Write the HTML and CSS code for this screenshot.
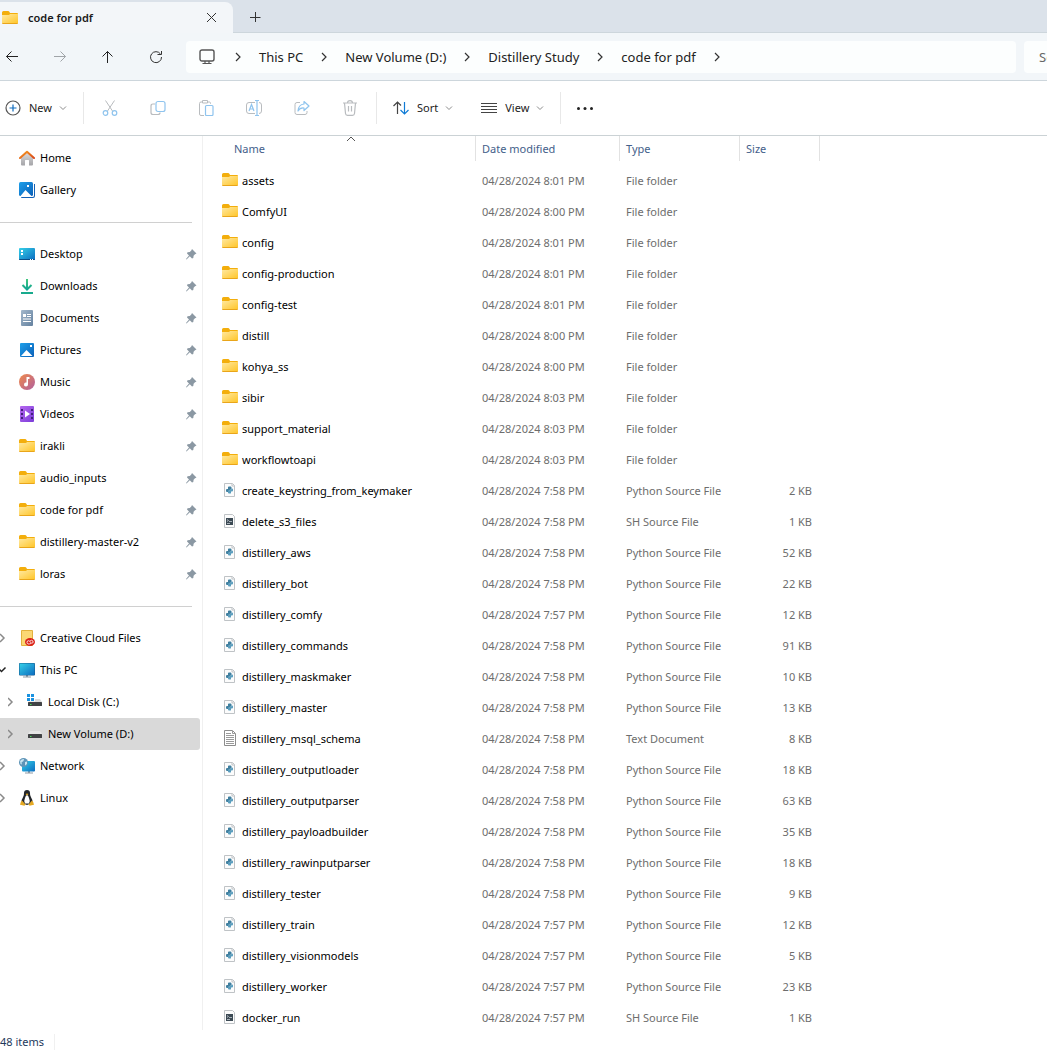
FILE: index.html
```html
<!DOCTYPE html>
<html lang="en">
<head>
    <meta charset="UTF-8">
    <meta name="viewport" content="width=device-width, initial-scale=1.0">
    <title>code for pdf</title>
    <link rel="stylesheet" href="styles.css">
</head>
<body>
    <!-- Icons -->
    <svg class="sprite" aria-hidden="true">
        <defs>
            <linearGradient id="g-folder" x1="0" y1="0" x2="1" y2="1"><stop offset="0" stop-color="#ffe9a2"/><stop offset="1" stop-color="#ffc62b"/></linearGradient>
            <linearGradient id="g-blue" x1="0" y1="0" x2="1" y2="1"><stop offset="0" stop-color="#1ea0ea"/><stop offset="1" stop-color="#0a5fb8"/></linearGradient>
            <linearGradient id="g-screen" x1="0" y1="0" x2="1" y2="1"><stop offset="0" stop-color="#35d0e8"/><stop offset="1" stop-color="#0c6cc0"/></linearGradient>
            <linearGradient id="g-roof" x1="0" y1="0" x2="1" y2="1"><stop offset="0" stop-color="#f79a1e"/><stop offset="1" stop-color="#d9481a"/></linearGradient>
            <linearGradient id="g-wall" x1="0" y1="0" x2="0" y2="1"><stop offset="0" stop-color="#dedede"/><stop offset="1" stop-color="#a4a4a8"/></linearGradient>
            <linearGradient id="g-down" x1="0" y1="0" x2="0" y2="1"><stop offset="0" stop-color="#3fc77c"/><stop offset="1" stop-color="#12a594"/></linearGradient>
            <linearGradient id="g-doc" x1="0" y1="0" x2="1" y2="1"><stop offset="0" stop-color="#a3b8cc"/><stop offset="1" stop-color="#64819f"/></linearGradient>
            <linearGradient id="g-music" x1="0" y1="0" x2="1" y2="1"><stop offset="0" stop-color="#f08a4b"/><stop offset="1" stop-color="#b05f9e"/></linearGradient>
            <linearGradient id="g-video" x1="0" y1="0" x2="1" y2="1"><stop offset="0" stop-color="#b668f0"/><stop offset="1" stop-color="#7a3cd8"/></linearGradient>
        </defs>
        <symbol id="folder" viewBox="0 0 16 16">
            <path fill="#f3ae0c" d="M0 2.5Q0 1 1.5 1H6Q7 1 7.5 2L8 3H15Q16 3 16 4V6H0z"/>
            <path fill="url(#g-folder)" d="M0 5H6.6Q7.4 5 8 4H16V13H0z"/>
            <path fill="#e9a51a" d="M0 13H16Q16 14 15 14H1Q0 14 0 13z"/>
        </symbol>
        <symbol id="home" viewBox="0 0 16 16">
            <path fill="url(#g-wall)" d="M2 7L8 2L14 7V14.5Q14 15.5 13 15.5H10V10.5Q10 10 9.500 10H6.500Q6 10 6 10.500V15.500H3Q2 15.500 2 14.500z"/>
            <path fill="none" stroke="url(#g-roof)" stroke-width="2" stroke-linecap="round" stroke-linejoin="round" d="M1 8L8 1.800L15 8"/>
        </symbol>
        <symbol id="gallery" viewBox="0 0 16 16">
            <path fill="#1561b5" d="M15 2H16V14Q16 16 14 16H3Q2 16 2 15H13.500Q15 15 15 13.500z"/>
            <rect fill="url(#g-blue)" width="14" height="14" rx="1.500"/>
            <path fill="#fff" d="M1.500 14L6.500 8L12.500 14zM8 3h2v2H8z"/>
        </symbol>
        <symbol id="desktop" viewBox="0 0 16 16">
            <rect fill="url(#g-screen)" y="2" width="16" height="12" rx="1"/>
            <path fill="#0b4d86" d="M0 13H16Q16 14 15 14H1Q0 14 0 13z"/>
            <path fill="#fff" d="M2 4H4V6H2zM2 7H4V9H2zM11 13H12V14H11zM13 13H14V14H13z"/>
        </symbol>
        <symbol id="downloads" viewBox="0 0 16 16">
            <path fill="none" stroke="url(#g-down)" stroke-width="2" d="M8.010 1V11M3.500 7L8 11.500L12.500 7"/>
            <path fill="#18aa8d" d="M2 14H14V16H2z"/>
        </symbol>
        <symbol id="documents" viewBox="0 0 16 16">
            <rect fill="url(#g-doc)" x="2" width="12" height="16" rx="1"/>
            <path fill="#fff" d="M4 4H7V7H4zM8 4H12V5H8zM8 6H12V7H8zM4 8.500H12V9.500H4zM4 11H12V12H4z"/>
        </symbol>
        <symbol id="pictures" viewBox="0 0 16 16">
            <rect fill="url(#g-blue)" x="1" y="1" width="14" height="14" rx="1"/>
            <path fill="#fff" d="M2 14L7.500 8L13.500 14zM11 3h2v2h-2z"/>
        </symbol>
        <symbol id="music" viewBox="0 0 16 16">
            <circle fill="url(#g-music)" cx="8" cy="8" r="8"/>
            <path fill="#fff" d="M7.500 3H10.500V5H9V10.500A2 2 0 1 1 7.500 8.600z"/>
        </symbol>
        <symbol id="videos" viewBox="0 0 16 16">
            <rect fill="url(#g-video)" x="1" width="14" height="16" rx="1"/>
            <path fill="#43217c" d="M2 3h2v2H2zM2 7h2v2H2zM2 11h2v2H2zM12 3h2v2h-2zM12 7h2v2h-2zM12 11h2v2h-2z"/>
            <path fill="#fff" d="M6 4.500L11 8L6 11.500z"/>
        </symbol>
        <symbol id="pin" viewBox="0 0 12 12">
            <path fill="#8b98a3" d="M7 1L11.500 5.500L10 6.200L8.600 7.800L8.300 10L7 10.500L4.800 8.200L1.500 11.500L1 11L4 7.500L2 5.400L2.500 4.300L4.800 4L6.300 2.500z"/>
        </symbol>
        <symbol id="creative" viewBox="0 0 16 16">
            <path fill="#fbd774" stroke="#e3b13c" d="M2.500 .5H13.500V15.500H2.500z"/>
            <ellipse cx="11" cy="12" rx="5" ry="4" fill="#da1f16"/>
            <path fill="none" stroke="#fff" stroke-width=".8" d="M12 13.500Q8 15 8 12.300Q8 10.500 9.800 10.700Q11 11 12.500 13.300Q15 13 14 11Q12.500 9.500 11 11"/>
        </symbol>
        <symbol id="monitor" viewBox="0 0 16 16">
            <path fill="#8e9aa5" d="M7 13H9V14.500H12V15.500H4V14.500H7z"/>
            <rect fill="#155a8f" y="1" width="16" height="12.500" rx="1"/>
            <rect fill="url(#g-screen)" x=".5" y="1.500" width="15" height="11.500" rx=".5"/>
        </symbol>
        <symbol id="disk-c" viewBox="0 0 16 16">
            <path fill="#1a92e0" d="M0 0H3V3H0zM4 0H7V3H4zM0 4H3V7H0zM4 4H7V7H4z"/>
            <path fill="#dcdcdc" d="M8 5H13L15 8H1L2 7.500H8z"/>
            <rect fill="#414345" x="1" y="8" width="14" height="4" rx=".5"/>
            <path fill="#4be05a" d="M3 10h1.500v1H3z"/>
        </symbol>
        <symbol id="disk-d" viewBox="0 0 16 16">
            <path fill="#e6e6e6" d="M3 5H13L15 8H1z"/>
            <rect fill="#414345" x="1" y="8" width="14" height="4" rx=".5"/>
            <path fill="#4be05a" d="M3 10h1.500v1H3z"/>
        </symbol>
        <symbol id="network" viewBox="0 0 16 16">
            <path fill="#8e9aa5" d="M9 13H11V14.500H14V15.500H6V14.500H9z"/>
            <rect fill="url(#g-screen)" x="3" y="3" width="13" height="10.500" rx="1"/>
            <circle cx="4.500" cy="4.500" r="4.500" fill="#5f95b8"/>
            <path fill="#c8e4f0" d="M1 3Q3 .5 5 1L4.500 3L2.500 4.500L3 6.500L1.500 6zM6 4L8 3.500L8 6L6 7.500z"/>
        </symbol>
        <symbol id="linux" viewBox="0 0 16 16">
            <path fill="#23262a" d="M8 0Q5 0 5 3Q5.200 5.500 4 7.200Q2 10 2.500 13L8 15L13.500 13Q14 10 12 7.200Q10.800 5.500 11 3Q11 0 8 0z"/>
            <path fill="#fff" d="M8 5Q6.600 5.500 6 8Q4.500 11 6 13.500H10Q11.500 11 10 8Q9.400 5.500 8 5z"/>
            <path fill="#e5a923" d="M6.500 4Q8 3 9.500 4L8 5.500zM3 10.500L6.500 14.500Q6 16 4.500 15.500L1 14.700Q1.500 12 3 10.500zM13 10.500L9.500 14.500Q10 16 11.500 15.500L15 14.700Q14.500 12 13 10.500z"/>
        </symbol>
        <symbol id="python" viewBox="0 0 16 16">
            <path fill="#fcfcfc" stroke="#bfc3c6" d="M2.500 1.500H10.500L12.500 3.500V14.500H2.500z"/>
            <path fill="none" stroke="#bfc3c6" d="M10 2V4H12.500"/>
            <path fill="#3f7f9f" d="M6 5Q6 4.500 7 4.500H8.500Q9.500 4.500 9.500 5.500V7.500L7.500 8Q6.500 8.500 6.500 10H5Q4 10 4 9V8Q4 7 5 7H6z"/>
            <path fill="#5a9dbd" d="M9 11Q9 11.500 8 11.500H7Q6 11.500 6 10.500V9Q6.500 8 8 8Q9.500 8 9.500 6.500H10Q11 6.500 11 7.500V8.500Q11 9.500 10 9.500H9z"/>
        </symbol>
        <symbol id="shell" viewBox="0 0 16 16">
            <path fill="#fcfcfc" stroke="#bfc3c6" d="M2.500 1.500H10.500L12.500 3.500V14.500H2.500z"/>
            <path fill="#3c4a54" d="M4 5H11V12H4z"/>
            <path fill="none" stroke="#c4ccd2" stroke-width=".8" d="M5 6.500L6.500 7.500L5 8.500M7 8.500H10M5 10.500H8"/>
        </symbol>
        <symbol id="text" viewBox="0 0 16 16">
            <path fill="#fff" stroke="#8d8d8d" d="M2.500 .5H10.500L13.500 3.500V15.500H2.500z"/>
            <path fill="none" stroke="#9a9a9a" d="M4 3.500H9M4 5.500H12M4 7.500H12M4 9.500H12M4 11.500H12M4 13.500H12M10.500 1V3.500H13"/>
        </symbol>
        <symbol id="expand" viewBox="0 0 19 16">
            <path fill="none" stroke="#8a8a8a" stroke-width="1.500" d="M0 4L4 8L0 12"/>
        </symbol>
        <symbol id="expanded" viewBox="0 0 19 16">
            <path fill="none" stroke="#222" stroke-width="1.500" d="M-2 6L1.500 9.500L5.500 5.500"/>
        </symbol>
        <symbol id="chevron-down" viewBox="0 0 8 8">
            <path fill="none" stroke="#8c8c8c" d="M1 2.500L4 5.500L7 2.500"/>
        </symbol>
        <symbol id="chevron-right" viewBox="0 0 8 10">
            <path fill="none" stroke="#333" stroke-width="1.200" d="M2 1L6 5L2 9"/>
        </symbol>
    </svg>

    <header class="title-bar">
        <div class="tab">
            <svg class="icon"><use href="#folder"/></svg>
            <span class="tab-title">code for pdf</span>
            <button type="button" class="tab-button" aria-label="Close tab">
                <svg class="icon" viewBox="0 0 16 16"><path fill="none" stroke="#333" d="M4 3L13 12M13 3L4 12"/></svg>
            </button>
        </div>
        <button type="button" class="tab-button new-tab" aria-label="New tab">
            <svg class="icon" viewBox="0 0 16 16"><path fill="none" stroke="#333" d="M8.500 3V13M3 8.500H13.500"/></svg>
        </button>
    </header>

    <nav class="nav-bar">
        <div class="nav-buttons">
            <button type="button" aria-label="Back"><svg class="icon" viewBox="0 0 16 16"><path fill="none" stroke="#222" d="M14 7.500H2.500M7.500 2.500L2.500 7.500L7.500 12.500"/></svg></button>
            <button type="button" aria-label="Forward"><svg class="icon" viewBox="0 0 16 16"><path fill="none" stroke="#a0a4a8" d="M2 7.500H13.500M8.500 2.500L13.500 7.500L8.500 12.500"/></svg></button>
            <button type="button" aria-label="Up"><svg class="icon" viewBox="0 0 16 16"><path fill="none" stroke="#222" d="M7.500 14V2.500M2.500 7.500L7.500 2.500L12.500 7.500"/></svg></button>
            <button type="button" aria-label="Refresh"><svg class="icon" viewBox="0 0 16 16"><path fill="none" stroke="#333" d="M12.500 5A5.500 5.500 0 1 0 13.500 8M13.500 2V5.500H9.500"/></svg></button>
        </div>
        <div class="address-bar">
            <svg class="icon device" viewBox="0 0 16 16"><rect x="1" y="1" width="14" height="11" rx="2" fill="none" stroke="#555" stroke-width="1.400"/><path fill="none" stroke="#555" stroke-width="1.200" d="M6 12V14.500M10 12V14.500M3.500 14.500H12.500"/></svg>
            <svg class="crumb-arrow"><use href="#chevron-right"/></svg>
            <a href="#">This PC</a>
            <svg class="crumb-arrow"><use href="#chevron-right"/></svg>
            <a href="#">New Volume (D:)</a>
            <svg class="crumb-arrow"><use href="#chevron-right"/></svg>
            <a href="#">Distillery Study</a>
            <svg class="crumb-arrow"><use href="#chevron-right"/></svg>
            <a href="#">code for pdf</a>
            <svg class="crumb-arrow"><use href="#chevron-right"/></svg>
        </div>
        <input type="text" class="search" placeholder="Search" aria-label="Search">
    </nav>

    <div class="toolbar">
        <div class="tool-group first">
            <button type="button" class="menu-button">
                <svg class="icon" viewBox="0 0 16 16"><circle cx="8" cy="8" r="7" fill="none" stroke="#555" stroke-width="1.200"/><path fill="none" stroke="#0f6cbd" stroke-width="1.200" d="M8 4.500V11.500M4.500 8H11.500"/></svg>
                <span>New</span>
                <svg class="arrow"><use href="#chevron-down"/></svg>
            </button>
        </div>
        <div class="tool-group icons">
            <button type="button" aria-label="Cut" disabled><svg class="icon" viewBox="0 0 16 16"><path fill="none" stroke="#b9bcbf" d="M3.500 .5L10.500 11M12.500 .5L5.500 11"/><g fill="none" stroke="#8fc4ee" stroke-width="1.200"><circle cx="3.500" cy="13" r="2.300"/><circle cx="12.500" cy="13" r="2.300"/></g></svg></button>
            <button type="button" aria-label="Copy" disabled><svg class="icon" viewBox="0 0 16 16"><path fill="none" stroke="#b9bcbf" stroke-width="1.200" d="M5 4H3Q1 4 1 6V12.500Q1 14.500 3 14.500H8Q10 14.500 10 12.500"/><rect x="6" y="1.500" width="9" height="10" rx="2" fill="none" stroke="#8fc4ee" stroke-width="1.200"/></svg></button>
            <button type="button" aria-label="Paste" disabled><svg class="icon" viewBox="0 0 16 16"><path fill="none" stroke="#b9bcbf" d="M6 15.500H3Q1.500 15.500 1.500 14V3.500Q1.500 2 3 2H4.500M9.500 2H11.500Q12.500 2 12.500 3.500V4M4.500 .5H9.500V3H4.500z"/><rect x="7.500" y="5.500" width="7.500" height="10" rx="1" fill="none" stroke="#8fc4ee" stroke-width="1.200"/></svg></button>
            <button type="button" aria-label="Rename" disabled><svg class="icon" viewBox="0 0 16 16"><path fill="none" stroke="#b9bcbf" d="M9 13.500H3Q.5 13.500 .5 11V5Q.5 2.500 3 2.500H9M13 2.500Q15.500 2.500 15.500 5V11Q15.500 13.500 13 13.500"/><path fill="none" stroke="#8fc4ee" stroke-width="1.200" d="M3 11L5.500 4.500L8 11M4 9H7M9 .5H13M11 .5V15.500M9 15.500H13"/></svg></button>
            <button type="button" aria-label="Share" disabled><svg class="icon" viewBox="0 0 16 16"><path fill="none" stroke="#b9bcbf" d="M6 2.500H3Q1 2.500 1 4.500V12.500Q1 14.500 3 14.500H11Q13 14.500 13 12.500V11"/><path fill="none" stroke="#8fc4ee" stroke-width="1.200" stroke-linejoin="round" d="M10 1.500L15 6L10 10.500V8Q6 7.500 4 11Q4.500 4.500 10 4z"/></svg></button>
            <button type="button" aria-label="Delete" disabled><svg class="icon" viewBox="0 0 16 16"><path fill="none" stroke="#b9bcbf" stroke-width="1.200" d="M1 3H15M5.500 3Q5.500 .7 8 .7Q10.500 .7 10.500 3M2.500 3L3.500 13.500Q3.700 15.300 5.500 15.300H10.500Q12.300 15.300 12.500 13.500L13.500 3M6.500 6V11.500M9.500 6V11.500"/></svg></button>
        </div>
        <div class="tool-group">
            <button type="button" class="menu-button">
                <svg class="icon" viewBox="0 0 16 16"><path fill="none" stroke="#444" stroke-width="1.200" d="M4.500 14V2M.5 6L4.500 2L8 5.500"/><path fill="none" stroke="#0f7bd6" stroke-width="1.200" d="M11.500 2V14M7.500 10L11.500 14L15.500 10"/></svg>
                <span>Sort</span>
                <svg class="arrow"><use href="#chevron-down"/></svg>
            </button>
            <button type="button" class="menu-button">
                <svg class="icon" viewBox="0 0 16 16"><path fill="none" stroke="#444" d="M0 3.500H16M0 6.500H16M0 9.500H16M0 12.500H16"/></svg>
                <span>View</span>
                <svg class="arrow"><use href="#chevron-down"/></svg>
            </button>
        </div>
        <div class="tool-group">
            <button type="button" aria-label="See more"><svg class="icon" viewBox="0 0 16 16"><g fill="#222"><circle cx="1.500" cy="8.500" r="1.500"/><circle cx="8" cy="8.500" r="1.500"/><circle cx="14.500" cy="8.500" r="1.500"/></g></svg></button>
        </div>
    </div>

    <div class="content">
        <aside class="sidebar">
            <ul>
                <li><a href="#"><svg class="icon"><use href="#home"/></svg>Home</a></li>
                <li><a href="#"><svg class="icon"><use href="#gallery"/></svg>Gallery</a></li>
            </ul>
            <hr>
            <ul>
                <li><a href="#"><svg class="icon"><use href="#desktop"/></svg>Desktop<svg class="pin"><use href="#pin"/></svg></a></li>
                <li><a href="#"><svg class="icon"><use href="#downloads"/></svg>Downloads<svg class="pin"><use href="#pin"/></svg></a></li>
                <li><a href="#"><svg class="icon"><use href="#documents"/></svg>Documents<svg class="pin"><use href="#pin"/></svg></a></li>
                <li><a href="#"><svg class="icon"><use href="#pictures"/></svg>Pictures<svg class="pin"><use href="#pin"/></svg></a></li>
                <li><a href="#"><svg class="icon"><use href="#music"/></svg>Music<svg class="pin"><use href="#pin"/></svg></a></li>
                <li><a href="#"><svg class="icon"><use href="#videos"/></svg>Videos<svg class="pin"><use href="#pin"/></svg></a></li>
                <li><a href="#"><svg class="icon"><use href="#folder"/></svg>irakli<svg class="pin"><use href="#pin"/></svg></a></li>
                <li><a href="#"><svg class="icon"><use href="#folder"/></svg>audio_inputs<svg class="pin"><use href="#pin"/></svg></a></li>
                <li><a href="#"><svg class="icon"><use href="#folder"/></svg>code for pdf<svg class="pin"><use href="#pin"/></svg></a></li>
                <li><a href="#"><svg class="icon"><use href="#folder"/></svg>distillery-master-v2<svg class="pin"><use href="#pin"/></svg></a></li>
                <li><a href="#"><svg class="icon"><use href="#folder"/></svg>loras<svg class="pin"><use href="#pin"/></svg></a></li>
            </ul>
            <hr>
            <ul class="tree">
                <li><a href="#"><svg class="expander"><use href="#expand"/></svg><svg class="icon"><use href="#creative"/></svg>Creative Cloud Files</a></li>
                <li><a href="#"><svg class="expander"><use href="#expanded"/></svg><svg class="icon"><use href="#monitor"/></svg>This PC</a></li>
                <li><a href="#" class="child"><svg class="expander"><use href="#expand"/></svg><svg class="icon"><use href="#disk-c"/></svg>Local Disk (C:)</a></li>
                <li><a href="#" class="child selected"><svg class="expander"><use href="#expand"/></svg><svg class="icon"><use href="#disk-d"/></svg>New Volume (D:)</a></li>
                <li><a href="#"><svg class="expander"><use href="#expand"/></svg><svg class="icon"><use href="#network"/></svg>Network</a></li>
                <li><a href="#"><svg class="expander"><use href="#expand"/></svg><svg class="icon"><use href="#linux"/></svg>Linux</a></li>
            </ul>
        </aside>

        <main class="files">
            <table>
                <colgroup>
                    <col class="col-name">
                    <col class="col-date">
                    <col class="col-type">
                    <col class="col-size">
                </colgroup>
                <thead>
                    <tr>
                        <th>Name<svg class="sort-arrow" viewBox="0 0 10 6"><path fill="none" stroke="#555" d="M1 5L5 1L9 5"/></svg></th>
                        <th>Date modified</th>
                        <th>Type</th>
                        <th>Size</th>
                    </tr>
                </thead>
                <tbody>
                    <tr><td><svg class="icon"><use href="#folder"/></svg>assets</td><td>04/28/2024 8:01 PM</td><td>File folder</td><td></td></tr>
                    <tr><td><svg class="icon"><use href="#folder"/></svg>ComfyUI</td><td>04/28/2024 8:00 PM</td><td>File folder</td><td></td></tr>
                    <tr><td><svg class="icon"><use href="#folder"/></svg>config</td><td>04/28/2024 8:01 PM</td><td>File folder</td><td></td></tr>
                    <tr><td><svg class="icon"><use href="#folder"/></svg>config-production</td><td>04/28/2024 8:01 PM</td><td>File folder</td><td></td></tr>
                    <tr><td><svg class="icon"><use href="#folder"/></svg>config-test</td><td>04/28/2024 8:01 PM</td><td>File folder</td><td></td></tr>
                    <tr><td><svg class="icon"><use href="#folder"/></svg>distill</td><td>04/28/2024 8:00 PM</td><td>File folder</td><td></td></tr>
                    <tr><td><svg class="icon"><use href="#folder"/></svg>kohya_ss</td><td>04/28/2024 8:00 PM</td><td>File folder</td><td></td></tr>
                    <tr><td><svg class="icon"><use href="#folder"/></svg>sibir</td><td>04/28/2024 8:03 PM</td><td>File folder</td><td></td></tr>
                    <tr><td><svg class="icon"><use href="#folder"/></svg>support_material</td><td>04/28/2024 8:03 PM</td><td>File folder</td><td></td></tr>
                    <tr><td><svg class="icon"><use href="#folder"/></svg>workflowtoapi</td><td>04/28/2024 8:03 PM</td><td>File folder</td><td></td></tr>
                    <tr><td><svg class="icon"><use href="#python"/></svg>create_keystring_from_keymaker</td><td>04/28/2024 7:58 PM</td><td>Python Source File</td><td>2 KB</td></tr>
                    <tr><td><svg class="icon"><use href="#shell"/></svg>delete_s3_files</td><td>04/28/2024 7:58 PM</td><td>SH Source File</td><td>1 KB</td></tr>
                    <tr><td><svg class="icon"><use href="#python"/></svg>distillery_aws</td><td>04/28/2024 7:58 PM</td><td>Python Source File</td><td>52 KB</td></tr>
                    <tr><td><svg class="icon"><use href="#python"/></svg>distillery_bot</td><td>04/28/2024 7:58 PM</td><td>Python Source File</td><td>22 KB</td></tr>
                    <tr><td><svg class="icon"><use href="#python"/></svg>distillery_comfy</td><td>04/28/2024 7:57 PM</td><td>Python Source File</td><td>12 KB</td></tr>
                    <tr><td><svg class="icon"><use href="#python"/></svg>distillery_commands</td><td>04/28/2024 7:58 PM</td><td>Python Source File</td><td>91 KB</td></tr>
                    <tr><td><svg class="icon"><use href="#python"/></svg>distillery_maskmaker</td><td>04/28/2024 7:58 PM</td><td>Python Source File</td><td>10 KB</td></tr>
                    <tr><td><svg class="icon"><use href="#python"/></svg>distillery_master</td><td>04/28/2024 7:58 PM</td><td>Python Source File</td><td>13 KB</td></tr>
                    <tr><td><svg class="icon"><use href="#text"/></svg>distillery_msql_schema</td><td>04/28/2024 7:58 PM</td><td>Text Document</td><td>8 KB</td></tr>
                    <tr><td><svg class="icon"><use href="#python"/></svg>distillery_outputloader</td><td>04/28/2024 7:58 PM</td><td>Python Source File</td><td>18 KB</td></tr>
                    <tr><td><svg class="icon"><use href="#python"/></svg>distillery_outputparser</td><td>04/28/2024 7:58 PM</td><td>Python Source File</td><td>63 KB</td></tr>
                    <tr><td><svg class="icon"><use href="#python"/></svg>distillery_payloadbuilder</td><td>04/28/2024 7:58 PM</td><td>Python Source File</td><td>35 KB</td></tr>
                    <tr><td><svg class="icon"><use href="#python"/></svg>distillery_rawinputparser</td><td>04/28/2024 7:58 PM</td><td>Python Source File</td><td>18 KB</td></tr>
                    <tr><td><svg class="icon"><use href="#python"/></svg>distillery_tester</td><td>04/28/2024 7:58 PM</td><td>Python Source File</td><td>9 KB</td></tr>
                    <tr><td><svg class="icon"><use href="#python"/></svg>distillery_train</td><td>04/28/2024 7:57 PM</td><td>Python Source File</td><td>12 KB</td></tr>
                    <tr><td><svg class="icon"><use href="#python"/></svg>distillery_visionmodels</td><td>04/28/2024 7:57 PM</td><td>Python Source File</td><td>5 KB</td></tr>
                    <tr><td><svg class="icon"><use href="#python"/></svg>distillery_worker</td><td>04/28/2024 7:57 PM</td><td>Python Source File</td><td>23 KB</td></tr>
                    <tr><td><svg class="icon"><use href="#shell"/></svg>docker_run</td><td>04/28/2024 7:57 PM</td><td>SH Source File</td><td>1 KB</td></tr>
                </tbody>
            </table>
        </main>
    </div>

    <footer class="status-bar">
        <span>48 items</span>
    </footer>
</body>
</html>
```
FILE: styles.css
```css
* {
    box-sizing: border-box;
}

body {
    display: flex;
    flex-direction: column;
    height: 100vh;
    margin: 0;
    overflow: hidden;
    background-color: #fff;
    color: #000;
    font-family: "Segoe UI", "Noto Sans", sans-serif;
    font-size: 11px;
    line-height: 16px;
}

button {
    display: flex;
    align-items: center;
    justify-content: center;
    padding: 0;
    border: none;
    background: none;
    color: #222;
    font: inherit;
}

a {
    color: inherit;
    text-decoration: none;
}

.sprite {
    position: absolute;
    width: 0;
    height: 0;
}

.icon {
    flex: none;
    width: 16px;
    height: 16px;
}

/* Title bar */
.title-bar {
    display: flex;
    height: 33px;
    padding-top: 2px;
    border-bottom: 1px solid #cdd6dc;
    background-color: #dbe2ea;
}

.tab {
    display: flex;
    align-items: center;
    width: 233px;
    height: 31px;
    padding: 0 10px 0 2px;
    border-radius: 0 8px 0 0;
    background-color: #f3f6f9;
}

.tab-title {
    flex: 1;
    margin-left: 10px;
    color: #1a1a1a;
    font-weight: 600;
}

.tab-button {
    width: 24px;
}

.new-tab {
    margin-left: 10px;
}

/* Navigation */
.nav-bar {
    display: flex;
    align-items: center;
    height: 48px;
    border-bottom: 1px solid #cdd6dc;
    background-color: #f2f6f9;
}

.nav-buttons {
    display: flex;
    gap: 24px;
    margin-right: 18px;
}

.nav-buttons button {
    width: 24px;
    height: 32px;
}

.address-bar {
    display: flex;
    flex: 1;
    align-items: center;
    height: 32px;
    padding-left: 13px;
    border-radius: 4px;
    background-color: #fcfefe;
    color: #222;
    font-size: 13px;
}

.device {
    margin-right: 2px;
}

.crumb-arrow {
    width: 8px;
    height: 10px;
    margin: 0 17px;
}

.search {
    width: 23px;
    height: 32px;
    margin-left: 8px;
    padding: 0 0 0 15px;
    border: none;
    border-radius: 4px 0 0 4px;
    background-color: #fcfefe;
    font: inherit;
    font-size: 13px;
}

.search::placeholder {
    color: #666;
}

/* Toolbar */
.toolbar {
    display: flex;
    align-items: center;
    height: 55px;
    border-bottom: 1px solid #cbd2d5;
}

.tool-group {
    display: flex;
    align-items: center;
    gap: 28px;
    height: 32px;
    padding: 0 16px;
}

.tool-group + .tool-group {
    border-left: 1px solid #e8e8e8;
}

.tool-group.first {
    padding-left: 5px;
}

.tool-group.icons {
    gap: 16px;
    padding: 0 10px;
}

.tool-group.icons button {
    width: 32px;
}

.menu-button {
    gap: 8px;
}

.arrow {
    width: 8px;
    height: 8px;
    margin-left: -1px;
}

/* Sidebar */
.content {
    display: flex;
    flex: 1;
    min-height: 0;
}

.sidebar {
    flex: none;
    width: 203px;
    padding: 6px 2px 0 0;
    border-right: 1px solid #f0f0f0;
    overflow: hidden;
}

.sidebar ul {
    margin: 0;
    padding: 0;
    list-style: none;
}

.sidebar a {
    display: flex;
    align-items: center;
    height: 32px;
    padding: 0 3px 0 19px;
    border-radius: 0 3px 3px 0;
}

.sidebar .icon {
    margin-right: 5px;
}

.sidebar .tree a {
    padding-left: 0;
}

.sidebar .tree .child {
    padding-left: 8px;
}

.sidebar .selected {
    background-color: #d9d9d9;
}

.sidebar hr {
    height: 1px;
    margin: 16px 8px 15px 0;
    border: none;
    background-color: #d0d0d0;
}

.expander {
    width: 19px;
    height: 16px;
}

.pin {
    width: 12px;
    height: 12px;
    margin-left: auto;
}

/* File list */
.files {
    flex: 1;
    overflow: hidden;
}

table {
    width: 617px;
    border-collapse: separate;
    border-spacing: 0;
    table-layout: fixed;
}

.col-name {
    width: 273px;
}

.col-date {
    width: 144px;
}

.col-type {
    width: 120px;
}

.col-size {
    width: 80px;
}

th {
    position: relative;
    height: 25px;
    padding: 0 6px;
    border-right: 1px solid #e2e2e2;
    color: #44608a;
    font-weight: normal;
    text-align: left;
}

th:first-child {
    padding-left: 31px;
}

.sort-arrow {
    position: absolute;
    top: 0;
    left: 143px;
    width: 10px;
    height: 6px;
}

tbody::before {
    display: block;
    height: 4px;
    content: "";
}

td {
    height: 31px;
    padding: 0 6px;
    color: #6d6d6d;
    white-space: nowrap;
}

td:first-child {
    padding-left: 19px;
    color: #000;
}

td:last-child {
    padding-right: 8px;
    text-align: right;
}

td .icon {
    margin-right: 4px;
    vertical-align: -3px;
}

/* Status bar */
.status-bar {
    display: flex;
    align-items: center;
    height: 21px;
    padding-top: 2px;
    color: #1e395b;
}

.status-bar span {
    padding-right: 10px;
    border-right: 1px solid #f0f0f0;
}
```
